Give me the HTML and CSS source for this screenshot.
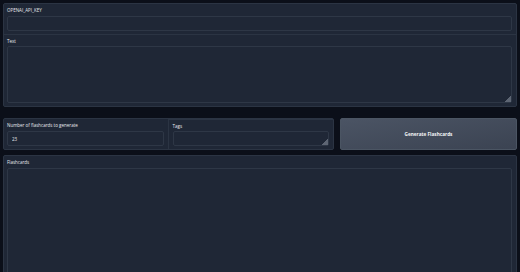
FILE: index.html
```html
<!DOCTYPE html>
<html lang="en">
<head>
  <meta charset="UTF-8">
  <meta name="viewport" content="width=device-width, initial-scale=1.0">
  <title>Flashcard Generator</title>
  <link rel="stylesheet" href="styles.css">
</head>
<body>
  <div class="app">
    <!-- key + source text -->
    <div class="block">
      <div class="field">
        <label class="label">OPENAI_API_KEY</label>
        <input class="input" type="password">
      </div>
      <div class="field">
        <label class="label">Text</label>
        <textarea class="input area-text"></textarea>
      </div>
    </div>

    <!-- options + action -->
    <div class="row">
      <div class="block block-cols">
        <div class="field">
          <label class="label">Number of flashcards to generate</label>
          <input class="input" type="text" value="23">
        </div>
        <div class="field">
          <label class="label">Tags</label>
          <textarea class="input area-tags"></textarea>
        </div>
      </div>
      <button class="btn">Generate Flashcards</button>
    </div>

    <!-- output -->
    <div class="block block-out">
      <div class="field">
        <label class="label">Flashcards</label>
        <textarea class="input area-out"></textarea>
      </div>
    </div>
  </div>
</body>
</html>
```

FILE: styles.css
```css
/* Page */
html, body {
  margin: 0;
  padding: 0;
  height: 100%;
  background: #0b0f19;
  color: #e5e7eb;
  font-family: "Open Sans", "Noto Sans", sans-serif;
  color-scheme: dark;
  overflow: hidden;
}
.app {
  display: flex;
  flex-direction: column;
  padding: 3px 3px 0;
  height: 100%;
  box-sizing: border-box;
}
/* Panels */
.block {
  background: #1f2736;
  border: 1px solid #2b3443;
  border-radius: 2px;
  box-sizing: border-box;
}
.block-out {
  flex: 1;
  margin-bottom: -20px;
  display: flex;
}
.block-out .field { flex: 1; }
.field {
  display: flex;
  flex-direction: column;
  padding: 3px 4px 3px 3px;
}
.block > .field + .field {
  border-top: 1px solid #2b3443;
}
.label {
  font-size: 4.5px;
  line-height: 6px;
  height: 6px;
  margin-bottom: 3px;
  color: #e8eaee;
}
.block > .field + .field .label { margin-bottom: 2px; }
.input {
  display: block;
  box-sizing: border-box;
  width: 100%;
  height: 15px;
  margin: 0;
  padding: 0 4px;
  background: #1f2736;
  border: 1px solid #2e3746;
  border-radius: 2px;
  color: #e5e7eb;
  font-family: inherit;
  font-size: 4.5px;
  outline: none;
  resize: none;
}
.area-text {
  height: 57px;
  resize: vertical;
}
.area-tags { resize: vertical; }
.area-out { flex: 1; height: auto; }
/* Small resize grip */
textarea::-webkit-resizer {
  background: linear-gradient(135deg, transparent 78%, #5d6573 78%);
}
/* Options row */
.row {
  display: flex;
  gap: 6px;
  margin: 11px 0 5px;
}
.block-cols {
  display: flex;
  width: 331px;
}
.block-cols .field { flex: 1; }
.block-cols .field + .field {
  border-left: 1px solid #2b3443;
  padding-left: 4px;
}
.btn {
  flex: 1;
  height: 32px;
  margin: 0;
  border: 1px solid #4b5563;
  border-radius: 2px;
  background: linear-gradient(to bottom right, #4b5464, #3b4352);
  color: #f3f4f6;
  font-family: inherit;
  font-size: 4.7px;
  font-weight: 700;
  cursor: pointer;
}
```
